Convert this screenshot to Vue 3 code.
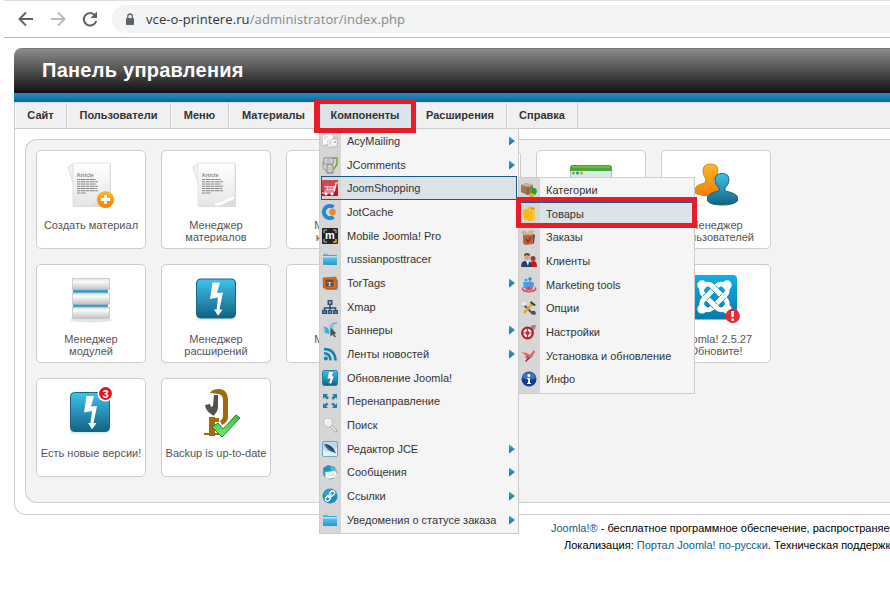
<script setup>
const navItems = ['Сайт', 'Пользователи', 'Меню', 'Материалы', 'Компоненты', 'Расширения', 'Справка']

const components = [
  { label: 'AcyMailing', icon: 'mail', sub: true },
  { label: 'JComments', icon: 'comments', sub: true },
  { label: 'JoomShopping', icon: 'cart', active: true },
  { label: 'JotCache', icon: 'cache' },
  { label: 'Mobile Joomla! Pro', icon: 'mobile' },
  { label: 'russianposttracer', icon: 'folder' },
  { label: 'TorTags', icon: 'tag', sub: true },
  { label: 'Xmap', icon: 'sitemap' },
  { label: 'Баннеры', icon: 'banner', sub: true },
  { label: 'Ленты новостей', icon: 'rss', sub: true },
  { label: 'Обновление Joomla!', icon: 'bolt' },
  { label: 'Перенаправление', icon: 'redirect' },
  { label: 'Поиск', icon: 'search' },
  { label: 'Редактор JCE', icon: 'editor', sub: true },
  { label: 'Сообщения', icon: 'messages', sub: true },
  { label: 'Ссылки', icon: 'links', sub: true },
  { label: 'Уведомения о статусе заказа', icon: 'folder', sub: true }
]

const shopping = [
  { label: 'Категории', icon: 'category' },
  { label: 'Товары', icon: 'product', active: true },
  { label: 'Заказы', icon: 'orders' },
  { label: 'Клиенты', icon: 'clients' },
  { label: 'Marketing tools', icon: 'marketing' },
  { label: 'Опции', icon: 'tools' },
  { label: 'Настройки', icon: 'settings' },
  { label: 'Установка и обновление', icon: 'install' },
  { label: 'Инфо', icon: 'info' }
]

const cards = [
  { lines: ['Создать материал'], icon: 'articleNew' },
  { lines: ['Менеджер', 'материалов'], icon: 'article' },
  { lines: ['Менеджер', 'категорий'] },
  { lines: [] },
  { lines: [], icon: 'window' },
  { lines: ['Менеджер', 'пользователей'], icon: 'users' },
  { lines: ['Менеджер', 'модулей'], icon: 'modules' },
  { lines: ['Менеджер', 'расширений'], icon: 'boltBig' },
  { lines: ['Менеджер', 'языков'] },
  { lines: [] },
  { lines: [] },
  { lines: ['Joomla! 2.5.27', 'Обновите!'], icon: 'joomla' },
  { lines: ['Есть новые версии!'], icon: 'updates' },
  { lines: ['Backup is up-to-date'], icon: 'backup' }
]

const icons = {
  mail: '<path d="M1 4l9-2 6 3v9l-5 1-10-2z" fill="#c3c3c3"/><path d="M1 3l7-2 3 2-1 7-9 2z" fill="#fff"/><path d="M5 7l10-1v7l-9 1z" fill="#f7f7f7" stroke="#c6c6c6" stroke-width=".6"/><path d="M7 9h3M7 11h2" stroke="#bbb"/><path d="M12 8h2v2h-2z" fill="#d4a8a8"/><path d="M2 4l4 0M2 6h2" stroke="#aaa" stroke-width=".7"/>',
  comments: '<path d="M2 1h9v6H2z" fill="#fff" stroke="#777"/><path d="M3.500 3h6M3.500 5h6" stroke="#666" stroke-width=".8"/><path d="M11 1h4v6l-3 5" fill="none" stroke="#7ba32e" stroke-width="1.500"/><path d="M1 5v6l3 3" fill="none" stroke="#8ba35b"/><path d="M5 16V9.500Q5 8 6.500 8 8 6 9 8q2 0 2 1.500V16z" fill="#f4f4f4" stroke="#6c7278"/><path d="M7 9v7M9 9v7" stroke="#777" stroke-width=".7"/>',
  cart: '<rect width="16" height="16" fill="#b8192c"/><path d="M0 0h16v7L0 11z" fill="#cf4553"/><path d="M16 3h-2l-1.500 8H2" fill="none" stroke="#fff" stroke-width="1.200"/><path d="M2 6h11l-1 4H4z" fill="#fff" opacity=".9"/><path d="M4 6v4M7 6v4M10 6v4M2 8h10" stroke="#c33444" stroke-width=".7"/><path d="M0 13h12" stroke="#fff"/><circle cx="4" cy="14" r="1.400" fill="#fff"/><circle cx="10" cy="14" r="1.400" fill="#fff"/>',
  cache: '<path d="M11.500 3.200a6 6 0 1 0 0 9.600" fill="none" stroke="#2487d2" stroke-width="4"/><circle cx="10.500" cy="8" r="3.200" fill="#e18c26"/>',
  mobile: '<rect width="16" height="16" rx="1" fill="#242424"/><path d="M2 5V2h3M14 5V2h-3M2 11v3h3" fill="none" stroke="#c4c4c4"/><path d="M11 14h3v-3" fill="none" stroke="#f4b51c" stroke-width="1.500"/><text x="8" y="11" text-anchor="middle" font-size="11" font-weight="bold" fill="#fff" font-family="Liberation Sans, sans-serif">m</text>',
  folder: '<path d="M1 4q0-1 1-1h3l1 1h8q1 0 1 1v9H1z" fill="#3ba9dc"/><path d="M1 5h14l-1 4H1z" fill="#bfe5ed"/><path d="M1 6.500h14v6.500q0 1-1 1H2q-1 0-1-1z" fill="url(#skyGrad)"/><path d="M2 3h4" stroke="#b8c98c"/>',
  tag: '<rect x="3" y="4" width="13" height="11" rx="2" fill="#8b8b8b"/><path d="M1 3l13-1 .5 10-2 2-11-1z" fill="#df6c17" stroke="#94511f" stroke-width=".7"/><rect x="3.500" y="4.500" width="8" height="7" fill="#574d43"/><text x="7.500" y="10.500" text-anchor="middle" font-size="7" font-weight="bold" fill="#f4e5d4" font-family="Liberation Serif, serif">T</text>',
  sitemap: '<path d="M8 5v4M2.500 12V9h11v3M8 9v3" fill="none" stroke="#2c4d70" stroke-width="1.500"/><path d="M5.500 1h5v5h-5zM0 11h5v4H0zM5.700 11h4.600v4H5.700zM11 11h5v4h-5z" fill="#2c5077"/><path d="M7 2.500h2v2H7zM1.500 12.500h2v1h-2zM7 12.500h2v1H7zM12.500 12.500h2v1h-2z" fill="#aebccb"/>',
  banner: '<path d="M1 4l5 2 2 6-5-1z" fill="#38aee2"/><path d="M8 5l4-2v8H7z" fill="#82cceb"/><path d="M8 5q2-4 7-4" fill="none" stroke="#5bb6df" stroke-width="1.400"/><path d="M1 4l3 4-3 1z" fill="#90d8ef"/><path d="M8.500 5.500l6 6-2.500.2 2 3-1.500.8-1.800-3-2.200 2z" fill="#4e4d50"/>',
  rss: '<circle cx="3.800" cy="12.500" r="2" fill="#167eab"/><path d="M2 7.300q6 0 6.500 7M2 3q11 0 11.500 11.500" fill="none" stroke="#1680ae" stroke-width="2.600"/>',
  bolt: '<rect x=".5" y=".5" width="15" height="15" rx="2" fill="url(#boltGrad)" stroke="#2482a3"/><path d="M7 2h4L9.700 6.500l2-.2L9 14 6.500 12l1.500-.5.5-3.300-3 .5z" fill="#fff"/>',
  redirect: '<path d="M1 1h5L4.700 2.400 7 4.700 5 6.500 2.500 4.200 1 6zM15 1v5l-1.400-1.400L11.300 7 9.500 5l2.300-2.500L10 1zM1 15v-5l1.400 1.400L4.700 9.500 6.500 11l-2.300 2.500L6 15zM15 15h-5l1.500-1.500L9.300 11 11 9.500l2.400 2.300L15 10z" fill="#247eaa"/>',
  search: '<path d="M9 9l6 6" stroke="#aaa" stroke-width="3"/><path d="M9 9l5 5" stroke="#ece9e6" stroke-width="1.500"/><circle cx="6" cy="5.500" r="4.600" fill="#edf0f2" stroke="#bbb"/><path d="M3.500 5q1-2 3-2" stroke="#fff" fill="none"/>',
  editor: '<rect x=".5" y=".5" width="15" height="15" rx="1.500" fill="#b8d9f1" stroke="#73a2c4"/><path d="M1 8q6 6 14-1v8H1z" fill="#e0f2fb"/><path d="M2 3q8 0 12 9Q5 10 2 3z" fill="#1e405f"/><path d="M3 4l10 8" stroke="#5391b8" stroke-width=".7"/>',
  messages: '<ellipse cx="8" cy="9" rx="7.500" ry="6.500" fill="#9cadb5"/><path d="M1 4l5-3 7 2-3 7-8 2z" fill="#2692c0"/><path d="M8 2l6 2-4 5z" fill="#52bcdd"/><path d="M3 8l11-1 1 6-11 2z" fill="#fff"/><path d="M3 8l6 4 5-5M4 15l4-4m7 2l-5-3" fill="none" stroke="#b8bfc4" stroke-width=".7"/>',
  links: '<circle cx="8" cy="8" r="7.500" fill="#168dba"/><path d="M2 5q4-7 10-2L3 12z" fill="#42addb" opacity=".6"/><g transform="rotate(-50 8 8)" fill="none" stroke="#fff" stroke-width="1.400"><rect x="2" y="6" width="5.500" height="4" rx="2"/><rect x="8.500" y="6" width="5.500" height="4" rx="2"/><path d="M5.500 8h5"/></g>',
  category: '<path d="M0 3l5-2 7 2v8l-6 2-6-3z" fill="#997754"/><path d="M0 3l5-2 7 2-5 2z" fill="#ccb49a"/><path d="M7 5v8" stroke="#684d35"/><path d="M11 6h3q2 1 2 4l-2 3-3-1z" fill="#2c9c2d"/><path d="M8 12q3-2 5 0l-1 4H9z" fill="#eaac16"/>',
  product: '<path d="M2 4l8-3 4 1v11l-4 2-7-2z" fill="#e89a08"/><path d="M2 4l9-1v12l-8-2z" fill="#ffb813"/><path d="M5 4Q6 0 9 3v3" fill="none" stroke="#f6d168" stroke-width="1.300"/><path d="M11 4l3-1v10l-3 2z" fill="#f5ca4b"/>',
  orders: '<path d="M2 5h10v10l-8 1-2-2z" fill="#a96a45"/><path d="M12 5l2 1-1 8-1 1z" fill="#72452f"/><path d="M0 3l3-2 3 3 3-3 5 1-3 4H2z" fill="#d2b18f"/><path d="M5 10l2 3 3-5" fill="none" stroke="#c62416" stroke-width="1.700"/>',
  clients: '<circle cx="12" cy="5.500" r="2.500" fill="#923d32"/><path d="M10 14l-1-4q1-2 4-2 3 0 3 6z" fill="#bd1e24"/><circle cx="6" cy="4" r="2.900" fill="#d7a780"/><path d="M3 3q0-3 3-3 3 0 3 3L6 2z" fill="#594138"/><path d="M0 14q0-6 4-6h3q3 0 4 6z" fill="#263f72"/><path d="M5 8h3l-1 5z" fill="#fff"/>',
  marketing: '<ellipse cx="8" cy="12" rx="7.500" ry="3.500" fill="#ef4a4a"/><ellipse cx="8" cy="11" rx="5.500" ry="2.500" fill="#fff"/><ellipse cx="8" cy="11" rx="4" ry="2" fill="#d94143"/><circle cx="5" cy="3" r="1.600" fill="#3b9dec"/><circle cx="9" cy="2" r="1.700" fill="#2c84e1"/><path d="M2 5h5l2-1 4 2-1 5-3 1-1-4-2 4-3-1z" fill="#409de9"/>',
  tools: '<path d="M2 4l10 10" stroke="#555" stroke-width="2"/><path d="M12 3L3 13" stroke="#e9a41a" stroke-width="2.500"/><path d="M10 1l5 4-2 1-4-3z" fill="#3a3e42"/><path d="M1 2l3 0 1 3-2 1-2-1z" fill="#f1f1f1"/><path d="M11 11l3 0 1 3-2 1-3-2z" fill="#4c4d4d"/>',
  settings: '<path d="M9 4l2-3 4 0-1 4-3 2z" fill="#8a8d91"/><circle cx="6.500" cy="9" r="5.300" fill="#fff" stroke="#c81826" stroke-width="2.200"/><circle cx="6.500" cy="9" r="2" fill="#c81826"/><path d="M2 9h9M6.500 4v10" stroke="#d32b36" stroke-width="1.200"/>',
  install: '<path d="M0 4l6 1 3 2 4-5 1 2-3 5-6 4 1-3-3-1 3-1z" fill="#d5504d"/><path d="M1 4l6 2 2 3 4-5" stroke="#efb6aa" stroke-width=".6" fill="none"/><path d="M7 10l-3 3 1 1 5-5" fill="#8e3435"/>',
  info: '<circle cx="8" cy="8" r="7.500" fill="#113e89"/><path d="M1 7q1-6 7-6t7 6Q8 10 1 7z" fill="#426faf"/><path d="M6 7h3v5h1v1H6v-1h1V8H6z" fill="#fff"/><circle cx="7.900" cy="4.500" r="1.500" fill="#fff"/>'
}

const page = '<g transform="translate(-2 -1)"><path d="M4 7l5-3 2 20-2-1z" fill="#f2f2f2" stroke="#ccc" stroke-width=".7"/><path d="M10 4h37v43H10z" fill="#ddd"/><path d="M9 3h37v43H9z" fill="url(#paperGrad)" stroke="#ddd" stroke-width=".8"/><text x="12.500" y="16.500" font-size="5.500" font-weight="bold" fill="#888" font-family="Liberation Sans, sans-serif">Article</text><path d="M13 19.500h19M13 21.800h21M13 24h19M13 26.300h21M13 28.500h20M13 30.800h21M13 33h9" stroke="#858585" stroke-width="1.100" stroke-dasharray="3 .6 5 .5"/></g>'
const boltBox = '<rect x="3" y="43" width="38" height="3" rx="1.500" fill="#d8eef4"/><rect x="3.500" y="4.500" width="39" height="39" rx="4" fill="url(#boltGrad)" stroke="#176582"/><path d="M19.500 8h7.500l-3 10.500 6-.5-3.500 17 3 .2-4.500 6-4-6.500 2.500.5L25 23l-8 1.500z" fill="#fff"/>'

const pictures = {
  articleNew: page + '<path d="M22 45q10-3 22-8v8z" fill="#ddd"/><circle cx="39.500" cy="38.500" r="8.600" fill="url(#orangeGrad)"/><path d="M39.500 34v9M35 38.500h9" stroke="#fff" stroke-width="2.800"/>',
  article: page + '<path d="M22 45q13-3 14-7 5 1 8-4v11z" fill="#ddd"/><path d="M24 44q10-2 12-5 4 0 7-3" fill="none" stroke="#fff" stroke-width="2.500"/>',
  modules: '<ellipse cx="25" cy="45" rx="21" ry="2.500" fill="#e4e4e4"/><path d="M7 14h35v5H7zM7 28h35v5H7z" fill="#2d9bca"/><path d="M6.500 3.500h37v11.500h-37zM6.500 18h37v11h-37zM6.500 32.200h37v11.500h-37z" fill="url(#slabGrad)" />' + [3.5, 18, 32.2].map(y => `<rect x="6.500" y="${y}" width="37" height="11.200" fill="url(#metalGrad)" stroke="#c3c4c7" stroke-width=".8"/>`).join(''),
  boltBig: '<g transform="translate(2 -.5)">' + boltBox + '</g>',
  updates: '<g transform="translate(1 -1)">' + boltBox + '</g><circle cx="39.500" cy="4.500" r="8" fill="#fff"/><circle cx="39.500" cy="4.500" r="6.500" fill="#e0161f"/><text x="39.500" y="8.500" text-anchor="middle" font-size="11" font-weight="bold" fill="#fff" font-family="Liberation Sans, sans-serif">3</text>',
  backup: '<path d="M19 4Q21 0 28 0q9 0 9 12v17q-1 5-6 7l-2-4q3-2 3-5V12q0-7-5-7z" fill="#a26a0c"/><path d="M23 6h4v12q0 4-3 7-1 3-4 0-5-3-6-9l5-1 1 3 2-1z" fill="#53514a"/><path d="M18 28h6v19h-6zM18 29h10v4H18zM13 44h18v2H13z" fill="#a26a0c"/><path d="M21 38l6-4 5 6 13-14 4 3-18 19z" fill="url(#greenGrad)" stroke="#238334"/>',
  window: '<rect x="4.500" y="4.500" width="41" height="40" rx="3" fill="#dce7e9" stroke="#acc0c4"/><path d="M4 10V7q0-3 3-3h36q3 0 3 3v3z" fill="#47a832"/><path d="M6 6h38" stroke="#86c958"/><circle cx="7.500" cy="12" r="1.500" fill="#6ead55"/><circle cx="11.500" cy="12" r="1.500" fill="#238dba"/><circle cx="15.500" cy="12" r="1.500" fill="#df8b31"/>',
  users: '<path d="M15 18q-3-4-3-8 0-7 7.500-7T27 10q0 4-4 8v4q8 2 9 6v5q-6 2-14 2T4 32v-4q1-4 10-6z" fill="url(#orangeGrad)" stroke="#da8118"/><path d="M28 27q-4-4-4-8 0-6.500 7-6.500t7 6.500q0 4-4 8v3q11 2 12.500 6v4q-4 4-15.500 4t-14.500-4v-4q1-4 11.500-6z" fill="url(#boltGrad)" stroke="#176582"/>',
  joomla: '<rect x="1" y="0" width="45" height="44.500" rx="4" fill="url(#joomlaGrad)"/><g fill="none"><g transform="rotate(45 23.500 22)"><rect x="8" y="16" width="31" height="12" rx="6" stroke="#fff" stroke-width="5"/></g><g transform="rotate(-45 23.500 22)"><rect x="8" y="16" width="31" height="12" rx="6" stroke="#fff" stroke-width="5"/><path d="M16 13.200h4M16 18.800h4M27 25.200h4M27 30.800h4" stroke="#0d9bcc" stroke-width=".9"/></g><g transform="rotate(45 23.500 22)"><path d="M16 13.200h4M16 18.800h4M27 25.200h4M27 30.800h4" stroke="#0d9bcc" stroke-width=".9"/></g></g><g fill="#fff"><circle cx="11" cy="10" r="4.700"/><circle cx="36" cy="10" r="4.700"/><circle cx="11" cy="34" r="4.700"/><circle cx="36" cy="34" r="4.700"/></g><circle cx="41.700" cy="41" r="7.200" fill="#e42c32"/><path d="M40 36h3.200l-.6 6h-2zM40.400 43.500h2.500V46h-2.500z" fill="#fff"/>'
}
</script>

<template>
  <div class="window">
    <svg class="defs" width="0" height="0">
      <defs>
        <linearGradient id="boltGrad" x2="0" y2="1"><stop stop-color="#3fc2ed" /><stop offset="1" stop-color="#116382" /></linearGradient>
        <linearGradient id="skyGrad" x2="0" y2="1"><stop stop-color="#56c3ed" /><stop offset="1" stop-color="#2b97d4" /></linearGradient>
        <linearGradient id="joomlaGrad" x2="0" y2="1"><stop stop-color="#12aee3" /><stop offset="1" stop-color="#087aa7" /></linearGradient>
        <linearGradient id="orangeGrad" x2="0" y2="1"><stop stop-color="#fdb929" /><stop offset="1" stop-color="#f47d05" /></linearGradient>
        <linearGradient id="greenGrad" x2="0" y2="1"><stop stop-color="#42ba53" /><stop offset="1" stop-color="#79eb68" /></linearGradient>
        <linearGradient id="metalGrad" x2="0" y2="1"><stop stop-color="#dedfe2" /><stop offset=".3" stop-color="#fafafa" /><stop offset="1" stop-color="#bfc1c5" /></linearGradient>
        <linearGradient id="paperGrad" x2="0" y2="1"><stop stop-color="#fff" /><stop offset="1" stop-color="#e6e6e6" /></linearGradient>
        <linearGradient id="arrowGrad" x2="0" y2="1"><stop stop-color="#35a6cc" /><stop offset="1" stop-color="#166e96" /></linearGradient>
      </defs>
    </svg>

    <div class="browser">
      <svg class="browser-icon" viewBox="0 0 18 18"><path d="M16 9H3M9 2.500L2.500 9 9 15.500" fill="none" stroke="#5f6368" stroke-width="2" /></svg>
      <svg class="browser-icon" viewBox="0 0 18 18"><path d="M2 9h13M9 2.500L15.500 9 9 15.500" fill="none" stroke="#babcbe" stroke-width="2" /></svg>
      <svg class="browser-icon" viewBox="0 0 18 18"><path d="M14 5.200A6.300 6.300 0 1 0 15.200 11" fill="none" stroke="#5f6368" stroke-width="2" /><path d="M16 1.500V8H9.500z" fill="#5f6368" /></svg>
      <div class="address">
        <svg class="lock" viewBox="0 0 10 13"><rect x="1" y="5" width="8" height="7" rx="1" fill="#5f6368" /><path d="M2.800 5V3.200a2.200 2.200 0 0 1 4.400 0V5" fill="none" stroke="#5f6368" stroke-width="1.300" /></svg>
        <span class="url">vce-o-printere.ru<span class="path">/administrator/index.php</span></span>
      </div>
    </div>

    <div class="admin">
      <header class="header"><h1>Панель управления</h1></header>
      <div class="body">
        <nav class="nav">
          <div v-for="item in navItems" :key="item" class="nav-item" :class="{ open: item === 'Компоненты' }">
            <span>{{ item }}</span>
            <div v-if="item === 'Компоненты'" class="menu main-menu">
              <div v-for="entry in components" :key="entry.label" class="entry" :class="{ active: entry.active }">
                <svg class="icon" viewBox="0 0 16 16" v-html="icons[entry.icon]"></svg>
                <span class="label">{{ entry.label }}</span>
                <svg v-if="entry.sub" class="arrow" viewBox="0 0 6 10"><path d="M0 .5L6 5 0 9.500z" fill="url(#arrowGrad)" /></svg>
              </div>
              <div class="menu sub-menu">
                <div v-for="entry in shopping" :key="entry.label" class="entry" :class="{ active: entry.active }">
                  <svg class="icon" viewBox="0 0 16 16" v-html="icons[entry.icon]"></svg>
                  <span class="label">{{ entry.label }}</span>
                </div>
                <div class="mark mark-product"></div>
              </div>
            </div>
            <div v-if="item === 'Компоненты'" class="mark mark-nav"></div>
          </div>
        </nav>
        <main class="panel">
          <div v-for="(card, i) in cards" :key="i" class="card">
            <svg class="picture" viewBox="0 0 50 50" v-html="pictures[card.icon] || ''"></svg>
            <span v-for="line in card.lines" :key="line" class="caption">{{ line }}</span>
          </div>
        </main>
      </div>
    </div>
    <footer class="footer">
      <p class="about"><a>Joomla!®</a> - бесплатное программное обеспечение, распространяемое</p>
      <p class="locale">Локализация: <a>Портал Joomla! по-русски</a>. Техническая поддержка</p>
    </footer>
  </div>
</template>

<style>
body { background: #fff; overflow: hidden; }
</style>

<style scoped>
.window { width: 890px; height: 589px; overflow: hidden; background: #fff; font-family: "Liberation Sans", Arial, sans-serif; font-size: 11px; color: #333; }
.window * { box-sizing: border-box; }
.defs { display: block; }
.browser { margin-left: 4px; height: 38px; border-top: 1px solid #dedede; border-bottom: 1px solid #b6b6b6; display: flex; align-items: center; gap: 14px; padding-left: 13px; }
.browser-icon { width: 18px; height: 18px; flex: none; }
.address { flex: 1; height: 28px; margin-left: -1px; border-radius: 14px 0 0 14px; background: #f1f3f4; display: flex; align-items: center; padding-left: 13px; }
.lock { width: 10px; height: 13px; margin-right: 11px; }
.url { font-family: "Open Sans", sans-serif; font-size: 13px; letter-spacing: .1px; color: #303336; white-space: nowrap; }
.path { color: #85888b; }
.admin { margin: 10px 0 0 14px; }
.header { height: 54px; border-radius: 8px 0 0; border-top: 1px solid #757575; background: linear-gradient(#8b8b8b, #111 44px, #2490c6 44px, #056a9f); padding: 7px 0 0 28px; }
.header h1 { margin: 0; color: #fff; font-size: 20px; line-height: 28px; letter-spacing: .25px; white-space: nowrap; }
.body { height: 413px; border: solid #ccc; border-width: 0 0 1px 1px; border-radius: 0 0 0 12px; }
.nav { height: 27px; background: #f0f0f0; border-top: 1px solid #dedede; border-bottom: 1px solid #ccc; display: grid; grid-template-columns: 52px 104px 58px 90px 95px 93px 71px; }
.nav-item { position: relative; display: flex; align-items: center; justify-content: center; padding-bottom: 2px; border-right: 1px solid #ccc; box-shadow: inset 1px 0 #fafafa; font-weight: bold; white-space: nowrap; }
.nav-item.open { background: #dbe4e9; padding-right: 2px; }
.menu { position: absolute; z-index: 2; border: 1px solid #ccc; background: linear-gradient(90deg, #d6d6d6 21px, #f5f5f5 21px); font-weight: normal; }
.main-menu { left: 0; top: 25px; width: 200px; height: 406px; }
.sub-menu { left: 198px; top: 48px; width: 177px; height: 217px; }
.entry { height: 23.7px; padding: 0 3px 0 2px; display: flex; align-items: center; white-space: nowrap; }
.icon { width: 16px; height: 16px; margin-right: 9px; flex: none; overflow: visible; }
.label { flex: 1; }
.arrow { width: 6px; height: 10px; }
.active { margin: 0 1px; padding: 0 2px 0 0; border: 1px solid #185a80; background: linear-gradient(90deg, #d6d6d6 19px, #dbe3e8 19px); }
.mark { position: absolute; border: 5px solid #e81c28; z-index: 4; }
.mark-nav { left: -5px; top: -4px; width: 102px; height: 34px; border-left-width: 6px; }
.mark-product { left: -3px; top: 19px; width: 181px; height: 31px; }
.panel { margin: 10px 0 0 10px; height: 364px; border: solid #ccc; border-width: 1px 0 1px 1px; border-radius: 12px 0 0 12px; background: #f3f3f3; padding: 10px; display: grid; grid-template-columns: repeat(6, 110px); grid-auto-rows: 99px; column-gap: 15px; row-gap: 15px; }
.card { border: 1px solid #ccc; border-radius: 5px; background: #fff; display: flex; flex-direction: column; align-items: center; padding-top: 10px; color: #555; }
.picture { width: 50px; height: 50px; margin-bottom: 8px; overflow: visible; flex: none; }
.caption { line-height: 12px; white-space: nowrap; }
.footer { margin-top: 5px; color: #000; white-space: nowrap; }
.footer p { margin: 0; line-height: 17px; }
.footer a { color: #125b87; }
.about { padding-left: 551px; }
.locale { padding-left: 564px; }
</style>
